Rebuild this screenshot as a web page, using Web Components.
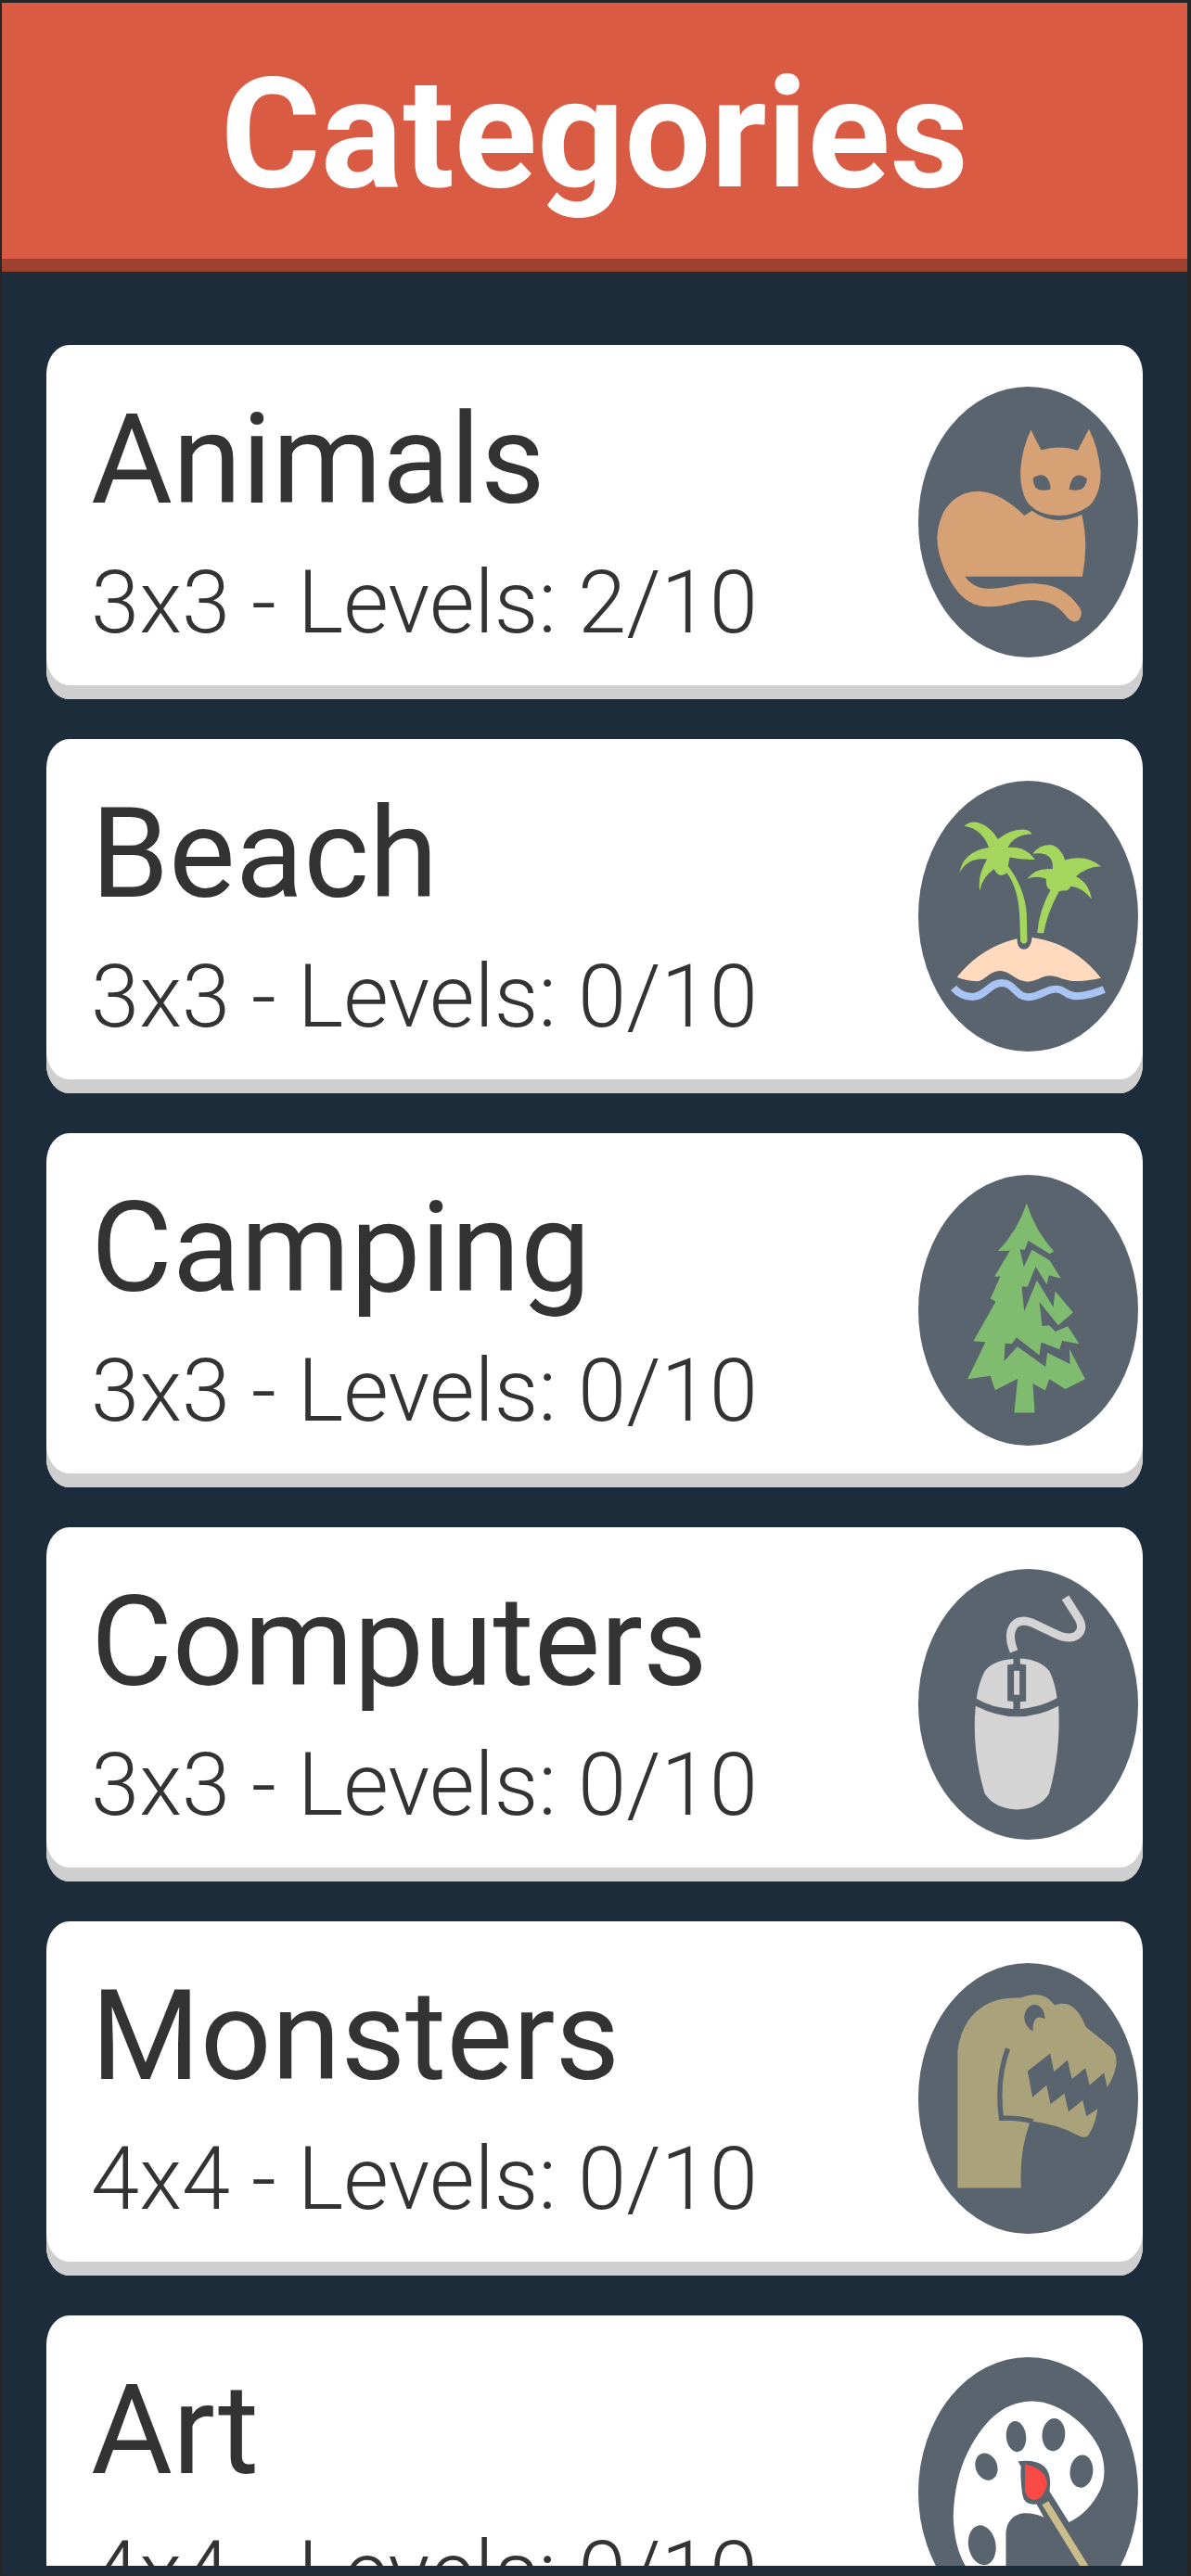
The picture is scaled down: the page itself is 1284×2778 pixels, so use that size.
<!DOCTYPE html>
<html lang="en">
<head>
<meta charset="utf-8">
<meta name="viewport" content="width=device-width, initial-scale=1">
<title>Categories</title>
<style>
  html, body { height: 100%; margin: 0; background: #1d2c3a; }
  body { font-family: Roboto, "Liberation Sans", sans-serif; color: #333; }
</style>
</head>
<body>
<category-screen>
  <screen-header slot="header">Categories</screen-header>
  <category-card name="Animals" size="3x3" done="2" total="10"><category-icon kind="cat"></category-icon></category-card>
  <category-card name="Beach" size="3x3" done="0" total="10"><category-icon kind="island"></category-icon></category-card>
  <category-card name="Camping" size="3x3" done="0" total="10"><category-icon kind="tree"></category-icon></category-card>
  <category-card name="Computers" size="3x3" done="0" total="10"><category-icon kind="mouse"></category-icon></category-card>
  <category-card name="Monsters" size="4x4" done="0" total="10"><category-icon kind="dinosaur"></category-icon></category-card>
  <category-card name="Art" size="4x4" done="0" total="10"><category-icon kind="palette"></category-icon></category-card>
</category-screen>

<script>
const BADGE = '#5a646e';

const ICONS = {
  cat: `
    <g fill="#d6a174">
      <path d="M424 187 Q432 205 457 253 Q515 236 575 254 L611 185 Q642 245 649 325 Q650 395 612 434 Q568 466 513 466 Q455 466 420 432 Q389 396 390 320 Q395 245 424 187Z"/>
      <path d="M427 450 Q468 480 513 481 Q552 480 588 463 Q611 560 590 664 L211 664 Q237 702 285 703 C340 705 370 687 425 687 C500 687 545 712 583 768 Q593 790 578 806 Q560 818 543 800 C510 754 475 741 425 741 C380 741 345 763 285 762 C220 760 184 718 156 664 Q122 600 121 540 C124 450 175 388 255 387 Q325 390 403 466Z"/>
    </g>
    <g fill="${BADGE}">
      <path d="M430 345 Q458 323 476 344 Q488 360 487 381 Q450 389 438 373 Q431 362 430 345Z"/>
      <path d="M605 346 Q576 323 558 346 Q549 360 547 381 Q584 389 596 372 Q604 362 605 346Z"/>
    </g>`,
  island: `
    <g fill="#a4d55d">
      <path d="M208 194 Q225 179 244 181 Q289 189 317 237 Q357 203 400 205 Q420 207 427 220 Q371 220 349 264 Q405 258 437 303 Q395 305 355 296 L350 324 Q404 395 410 480 L412 570 Q401 583 390 570 L387 485 Q383 397 346 346 Q330 361 315 349 L304 334 Q266 361 259 405 Q249 361 282 302 Q221 295 193 346 Q205 277 288 264 Q266 203 208 194Z"/>
      <path d="M430 284 Q448 256 486 255 Q519 260 534 305 Q600 284 650 325 Q605 326 569 358 Q611 378 620 432 Q589 393 552 390 Q545 408 528 403 L514 407 Q475 480 465 542 L444 541 Q450 470 487 402 Q471 398 473 366 Q442 354 412 366 Q440 327 494 334 Q498 275 430 284Z"/>
    </g>
    <path fill="#ffdabf" d="M185 685 Q262 588 379 560 Q379 594 401 595 Q424 594 427 556 Q560 574 650 688 Q595 700 558 698 C520 693 510 681 485 681 C455 681 445 700 413 700 C370 697 360 665 321 665 C285 668 275 698 250 699 Q210 696 185 685Z"/>
    <path fill="none" stroke="#aac3f5" stroke-width="24" d="M174 720 Q198 748 234 749 C275 750 290 704 329 704 C370 704 375 750 413 750 C455 750 470 724 505 724 C535 724 535 747 570 747 Q610 746 660 725"/>`,
  tree: `
    <path fill="#80bc70" d="M410 140 Q438 230 498 296 L485 304 L415 261 L404 290 L388 289 L401 346 L427 290 L484 325 L521 384 L482 373 L475 403 L439 345 L413 410 L394 410 L402 490 L443 390 L496 477 L502 425 L560 494 L512 536 L451 460 L460 538 L483 536 L502 556 L543 539 L580 597 L525 586 L516 614 L457 591 L451 633 L377 575 L362 596 L340 595 L337 653 L380 605 L471 671 L477 625 L550 662 L548 612 L599 711 L535 743 L483 711 L470 748 L430 725 L436 820 L370 820 L381 709 L308 747 L293 700 L219 711 L277 590 L238 587 L310 459 L293 449 L325 377 L306 378 L356 293 L318 294 Q380 230 410 140Z"/>`,
  mouse: `
    <g fill="#d4d4d4">
      <path d="M248 468 Q254 420 274 380 Q302 342 367 339 L367 356 L348 358 L348 476 L367 478 L367 502 Q295 498 248 468Z"/>
      <path d="M508 467 Q503 420 484 380 Q454 341 389 338 L389 356 L408 358 L408 477 L389 479 L389 502 Q455 497 508 467Z"/>
      <path d="M369 378 H387 V456 H369Z"/>
      <path d="M245 492 Q315 527 378 527 Q450 526 513 492 Q521 640 482 778 Q450 828 378 829 Q307 826 275 778 Q232 635 245 492Z"/>
    </g>
    <path fill="none" stroke="#d4d4d4" stroke-width="27" d="M369 315 Q347 260 369 230 Q388 208 425 221 L495 254 Q545 280 570 264 Q598 244 578 208 L535 140"/>`,
  dinosaur: `
    <g transform="translate(0 -15)">
      <path fill="#aaa27a" d="M187 793 V350 C200 238 270 169 390 175 Q463 145 501 199 C550 180 580 215 601 269 L681 335 Q703 355 699 392 Q693 432 670 466 L660 418 L613 459 L600 403 L556 439 L542 377 L498 415 L486 356 L413 413 L429 498 L474 459 L487 520 L532 486 L545 545 L591 508 L603 560 L639 536 Q632 590 607 624 Q597 632 581 624 Q505 583 418 575 L420 582 Q386 670 392 793Z"/>
      <path fill="none" stroke="${BADGE}" stroke-width="16" d="M349 340 Q312 440 328 566 Q385 564 430 577"/>
      <path fill="${BADGE}" d="M431 284 Q402 267 402 236 Q408 198 438 197 Q467 203 469 244 Q455 234 440 242 Q427 258 431 284Z"/>
    </g>`,
  palette: `
    <g transform="translate(0 -75)">
      <path fill="#fff" d="M173 640 Q176 520 220 430 C280 310 350 265 430 265 C520 266 618 350 650 430 Q672 500 648 553 Q610 630 545 659 L460 640 Q430 627 399 629 Q350 636 343 690 V850 Q343 900 300 885 Q178 820 173 640Z"/>
      <g fill="${BADGE}">
        <ellipse cx="376" cy="380" rx="32" ry="50" transform="rotate(-6 376 380)"/>
        <ellipse cx="497" cy="374" rx="37" ry="53" transform="rotate(5 497 374)"/>
        <ellipse cx="587" cy="493" rx="37" ry="53" transform="rotate(6 587 493)"/>
        <ellipse cx="280" cy="478" rx="35" ry="45" transform="rotate(-20 280 478)"/>
        <ellipse cx="266" cy="733" rx="44" ry="65" transform="rotate(-10 266 733)"/>
        <path d="M382 460 Q484 448 486 528 L484 558 L560 680 L500 705 L442 600 Q402 605 396 568 Q388 500 392 478Z"/>
      </g>
      <path fill="#f94a48" d="M405 469 Q474 487 476 533 Q466 585 432 586 Q405 581 404 548Z"/>
      <path fill="none" stroke="#cbbc8b" stroke-width="24" d="M470 596 L620 840"/>
    </g>`
};

class CategoryIcon extends HTMLElement {
  connectedCallback() {
    this.attachShadow({ mode: 'open' }).innerHTML = `
      <style>
        :host { display: block; flex: none; width: 237px; height: 292px; }
        svg { display: block; width: 100%; height: 100%; }
      </style>
      <svg viewBox="60 47 710 880" preserveAspectRatio="none" aria-hidden="true">
        <ellipse cx="415" cy="487" rx="355" ry="440" fill="${BADGE}"/>
        ${ICONS[this.getAttribute('kind')]}
      </svg>`;
  }
}

class CategoryCard extends HTMLElement {
  connectedCallback() {
    const v = n => this.getAttribute(n);
    this.attachShadow({ mode: 'open' }).innerHTML = `
      <style>
        :host { display: block; }
        button {
          display: flex; align-items: center; justify-content: space-between;
          width: 100%; height: 382px; margin: 0; padding: 0 5px 0 48px;
          border: 0; border-radius: 25px / 31px;
          background: #fff; box-shadow: inset 0 -15px 0 #cfcfcf;
          font: inherit; color: inherit; text-align: left; cursor: pointer;
        }
        .text { display: flex; flex-direction: column; padding-top: 20px; white-space: nowrap; }
        .name { font-size: 135px; line-height: 154px; }
        .levels { font-size: 94px; line-height: 154px; font-weight: 300; }
      </style>
      <button type="button">
        <span class="text">
          <span class="name">${v('name')}</span>
          <span class="levels">${v('size')} - Levels: ${v('done')}/${v('total')}</span>
        </span>
        <slot></slot>
      </button>`;
  }
}

class ScreenHeader extends HTMLElement {
  connectedCallback() {
    this.attachShadow({ mode: 'open' }).innerHTML = `
      <style>
        :host { display: block; background: #d95b43; border-bottom: 14px solid #9e4230; }
        h1 { margin: 0; padding-top: 8px; font-size: 165px; line-height: 268px; font-weight: 700; color: #fff; text-align: center; }
      </style>
      <h1><slot></slot></h1>`;
  }
}

class CategoryScreen extends HTMLElement {
  connectedCallback() {
    this.attachShadow({ mode: 'open' }).innerHTML = `
      <style>
        :host {
          display: flex; flex-direction: column; box-sizing: border-box;
          height: 100vh; padding-bottom: 10px;
          border: solid #262626; border-width: 3px 4px 1px 2px;
          background: #1d2c3a;
        }
        main {
          display: flex; flex-direction: column; gap: 43px;
          flex: 1; min-height: 0; overflow-y: auto; scrollbar-width: none;
          box-sizing: border-box; padding: 79px 48px 43px;
        }
      </style>
      <slot name="header"></slot>
      <main><slot></slot></main>`;
  }
}

customElements.define('category-icon', CategoryIcon);
customElements.define('category-card', CategoryCard);
customElements.define('screen-header', ScreenHeader);
customElements.define('category-screen', CategoryScreen);
</script>
</body>
</html>
